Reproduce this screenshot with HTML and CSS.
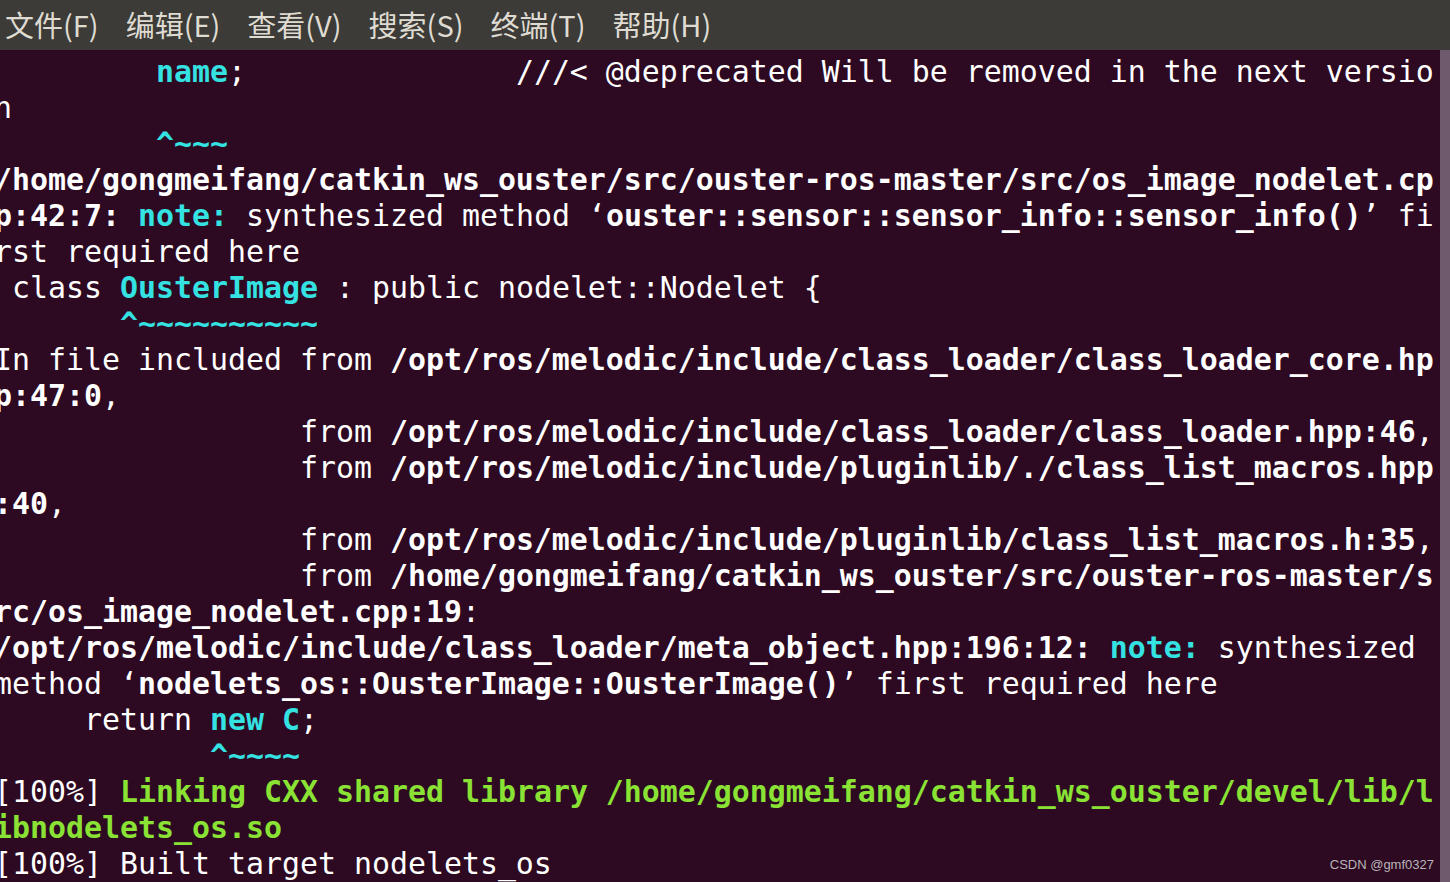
FILE: index.html
```html
<!DOCTYPE html>
<html lang="zh">
<head>
<meta charset="utf-8">
<title>Terminal</title>
<link rel="stylesheet" href="styles.css">
</head>
<body>
<div class="window">
  <nav class="menubar">
    <span class="menu-item">文件(F)</span>
    <span class="menu-item">编辑(E)</span>
    <span class="menu-item">查看(V)</span>
    <span class="menu-item">搜索(S)</span>
    <span class="menu-item">终端(T)</span>
    <span class="menu-item">帮助(H)</span>
  </nav>
  <div class="term-area">
    <div class="term">
<pre class="screen">         <span class="c">name</span>;               ///&lt; @deprecated Will be removed in the next versio
n
         <span class="c">^~~~</span>
<span class="b">/home/gongmeifang/catkin_ws_ouster/src/ouster-ros-master/src/os_image_nodelet.cp</span>
<span class="b">p:42:7:</span> <span class="c">note:</span> synthesized method ‘<span class="b">ouster::sensor::sensor_info::sensor_info()</span>’ fi
rst required here
 class <span class="c">OusterImage</span> : public nodelet::Nodelet {
       <span class="c">^~~~~~~~~~~</span>
In file included from <span class="b">/opt/ros/melodic/include/class_loader/class_loader_core.hp</span>
<span class="b">p:47:0</span>,
                 from <span class="b">/opt/ros/melodic/include/class_loader/class_loader.hpp:46</span>,
                 from <span class="b">/opt/ros/melodic/include/pluginlib/./class_list_macros.hpp</span>
<span class="b">:40</span>,
                 from <span class="b">/opt/ros/melodic/include/pluginlib/class_list_macros.h:35</span>,
                 from <span class="b">/home/gongmeifang/catkin_ws_ouster/src/ouster-ros-master/s</span>
<span class="b">rc/os_image_nodelet.cpp:19</span>:
<span class="b">/opt/ros/melodic/include/class_loader/meta_object.hpp:196:12:</span> <span class="c">note:</span> synthesized
method ‘<span class="b">nodelets_os::OusterImage::OusterImage()</span>’ first required here
     return <span class="c">new C</span>;
            <span class="c">^~~~~</span>
[100%] <span class="g">Linking CXX shared library /home/gongmeifang/catkin_ws_ouster/devel/lib/l</span>
<span class="g">ibnodelets_os.so</span>
[100%] Built target nodelets_os</pre>
    </div>
    <div class="scrollbar"></div>
    <span class="watermark">CSDN @gmf0327</span>
  </div>
</div>
</body>
</html>
```
FILE: styles.css
```css
html, body {
  margin: 0;
  padding: 0;
  width: 1450px;
  height: 882px;
  overflow: hidden;
  background: #2d0922;
}

.window {
  display: flex;
  flex-direction: column;
  width: 1450px;
  height: 882px;
}

.menubar {
  height: 50px;
  flex: 0 0 50px;
  background: #3c3b37;
  display: flex;
  align-items: center;
  gap: 27px;
  padding-left: 5px;
  padding-bottom: 2px;
  box-sizing: border-box;
  font-family: "Noto Sans CJK SC", "Noto Sans", sans-serif;
  font-size: 29px;
  color: #dfdbd2;
}

.menu-item {
  line-height: 48px;
  white-space: nowrap;
}

.term-area {
  position: relative;
  flex: 1;
  display: flex;
  background: #2d0922;
  overflow: hidden;
}

.term {
  flex: 1;
  overflow: hidden;
  padding-top: 4px;
}

.screen {
  margin: 0 0 0 -6px;
  font-family: "DejaVu Sans Mono", "Liberation Mono", monospace;
  font-size: 29.9px;
  line-height: 36px;
  color: #ffffff;
  white-space: pre;
}

.b {
  font-weight: bold;
}

.c {
  font-weight: bold;
  color: #34e2e2;
}

.g {
  font-weight: bold;
  color: #8ae234;
}

.scrollbar {
  flex: 0 0 10px;
  background: #6e5a6c;
}

.watermark {
  position: absolute;
  right: 16px;
  bottom: 10px;
  font-family: "Liberation Sans", Arial, sans-serif;
  font-size: 13px;
  color: #b9b4b8;
}
```
